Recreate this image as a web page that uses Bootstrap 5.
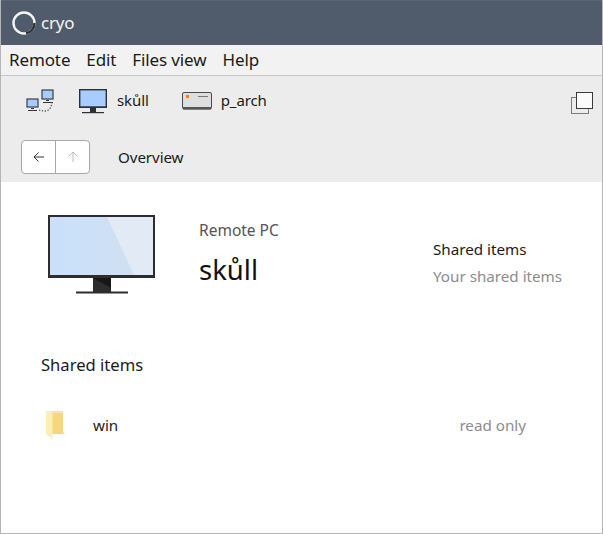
<!DOCTYPE html>
<html lang="en">
<head>
<meta charset="utf-8">
<title>cryo</title>
<link href="https://cdn.jsdelivr.net/npm/bootstrap@5.3.0/dist/css/bootstrap.min.css" rel="stylesheet">
<style>
html,body{height:100%;margin:0;overflow:hidden}
body{font-family:"Noto Sans","Open Sans","Liberation Sans",sans-serif;color:#1a1a1a;background:#fff}
.shell{width:603px;height:534px;border:solid #b5b5b5;border-width:0 1px 1px 1px;display:flex;flex-direction:column}
.titlebar{height:45px;flex:none;background:#505c6b;border-top:1px solid #5a6675;color:#f4f5f6;font-size:17px;letter-spacing:-.2px;padding-left:10px;gap:4px}
.menubar{height:31px;flex:none;background:#f2f2f2;border-bottom:1px solid #c6c6c6;font-size:17px;padding-left:8px;gap:16px;letter-spacing:-.12px}
.toolzone{height:106px;flex:none;background:#ececec;font-size:15px;letter-spacing:-.1px}
.tabrow{height:52px;padding:0 7px 2px 25px}
.crumbrow{height:54px;padding:4px 0 0 20px;gap:28px}
.navpair{width:69px;height:34px;border:1px solid #a8a8a8;border-radius:4px;background:#fff;overflow:hidden}
.navpair span{flex:1;display:flex;align-items:center;justify-content:center}
.navpair span+span{border-left:1px solid #a8a8a8}
.crumbtext{font-size:15.200px}
.tab-b{margin-left:25px}
.tab-name{margin-left:10px;margin-bottom:2px}
.tab-c{margin-left:33px;margin-right:9px}
.tab-d{margin-bottom:2px}
.tab-e{margin-top:6px}
.main{flex:1;position:relative}
.summary{padding:33px 40px 0 47px;height:141px}
.pcinfo{margin-left:43px;margin-top:4px}
.pclabel{font-size:15.500px;color:#555;line-height:22px}
.pcname{font-size:27.500px;line-height:38px;margin-top:10px;color:#111}
.sharebox{margin-left:auto;margin-top:21px;width:129px;font-size:15.200px;line-height:27px;white-space:nowrap}
.muted-g{color:#8c8c8c}
.sec-title{font-size:16.600px;padding:0 0 0 40px;line-height:24px;margin-top:30px}
.share-row{padding:0 76px 0 44px;margin-top:31px;height:34px;font-size:15.200px}
.share-name{margin-left:26px}
</style>
</head>
<body>
<div class="shell">
  <div class="titlebar d-flex align-items-center">
    <svg width="26" height="26" viewBox="0 0 26 26"><circle cx="13" cy="13" r="10.500" fill="none" stroke="#f4f5f6" stroke-width="2.400"/><path d="M23.500 13A10.500 10.500 0 0 1 15 23.300" fill="none" stroke="#2f3338" stroke-width="2.400"/></svg>
    <span>cryo</span>
  </div>
  <div class="menubar d-flex align-items-center"><span>Remote</span><span>Edit</span><span>Files view</span><span>Help</span></div>
  <div class="toolzone">
    <div class="tabrow d-flex align-items-center">
      <svg width="28" height="24" viewBox="0 0 28 24" class="flex-none"><rect x="1" y="10" width="11" height="8" fill="#a9ccff" stroke="#3a3f45" stroke-width="1.200"/><path d="M5 19h3v1H5zM2 21h9v1H2z" fill="#333"/><rect x="16" y="1" width="11" height="9" fill="#a9ccff" stroke="#3a3f45" stroke-width="1.200"/><path d="M20 11h3v1h-3zM17 13h10v1H17z" fill="#333"/><path d="M13 21c6 2 12 2 13-8" fill="none" stroke="#444" stroke-width="1.200" stroke-dasharray="1.300 1.600"/></svg>
      <svg width="28" height="25" viewBox="0 0 28 25" class="tab-b"><rect x=".7" y=".7" width="26.600" height="17.600" fill="#a9ccff" stroke="#2c3034" stroke-width="1.400"/><rect x="0" y="17.500" width="28" height="1.500" fill="#2c3034"/><rect x="11" y="19" width="6" height="4" fill="#2c3034"/><rect x="3" y="23" width="22" height="1.200" fill="#2c3034"/></svg>
      <span class="tab-name">skůll</span>
      <svg width="30" height="18" viewBox="0 0 30 18" class="tab-c"><rect x=".5" y=".5" width="29" height="16.500" rx="1.500" fill="#dedede" stroke="#4a4a4a"/><rect x="1" y="15" width="28" height="2.400" fill="#555"/><rect x="4" y="3" width="3" height="3" fill="#ff7a1a"/><rect x="16" y="4" width="10" height="1" fill="#777"/></svg>
      <span class="tab-d">p_arch</span>
      <svg width="24" height="24" viewBox="0 0 24 24" class="ms-auto tab-e"><rect x=".5" y="5.500" width="17" height="16" fill="none" stroke="#7c7c7c"/><rect x="5.500" y=".5" width="16" height="16" fill="#fafafa" stroke="#3a3a3a"/></svg>
    </div>
    <div class="crumbrow d-flex align-items-center">
      <div class="navpair d-flex">
        <span><svg width="12" height="12" viewBox="0 0 12 12"><path d="M11 6H1M5.500 1.500 1 6l4.500 4.500" fill="none" stroke="#333"/></svg></span>
        <span><svg width="12" height="12" viewBox="0 0 12 12"><path d="M6 11V1M1.500 5.500 6 1l4.500 4.500" fill="none" stroke="#bdbdbd"/></svg></span>
      </div>
      <span class="crumbtext">Overview</span>
    </div>
  </div>
  <div class="main">
    <div class="summary d-flex align-items-start">
      <svg width="108" height="79" viewBox="0 0 108 79" class="flex-none">
        <defs><linearGradient id="scr" x1="0" y1="0" x2="1" y2="0"><stop offset="0" stop-color="#c9e0fb"/><stop offset=".7" stop-color="#d0e0f3"/></linearGradient></defs>
        <rect x="0" y="0" width="107" height="63" fill="#2d2d2d"/>
        <rect x="2" y="2" width="103" height="58" fill="url(#scr)"/>
        <path d="M59 2h46v58H86z" fill="#e1eaf5"/>
        <rect x="45" y="63" width="18" height="14" fill="#2d2d2d"/>
        <path d="M45 63h18v10z" fill="#171717"/>
        <rect x="28" y="76.500" width="52" height="2" fill="#2d2d2d"/>
      </svg>
      <div class="pcinfo">
        <div class="pclabel">Remote PC</div>
        <div class="pcname">skůll</div>
      </div>
      <div class="sharebox">
        <div>Shared items</div>
        <div class="muted-g">Your shared items</div>
      </div>
    </div>
    <div class="sec-title">Shared items</div>
    <div class="share-row d-flex align-items-center">
      <svg width="22" height="30" viewBox="0 0 22 30" class="flex-none"><path d="M1 1h17v21l2 2H1z" fill="#f5d77d"/><path d="M1 1h5l1.500 1v27l-1.500-1-5-4z" fill="#fdeeb8"/><path d="M6 1h12v2H7z" fill="#f9e4a2"/></svg>
      <span class="share-name">win</span>
      <span class="ms-auto muted-g">read only</span>
    </div>
  </div>
</div>
<script src="https://cdn.jsdelivr.net/npm/bootstrap@5.3.0/dist/js/bootstrap.bundle.min.js"></script>
</body>
</html>
